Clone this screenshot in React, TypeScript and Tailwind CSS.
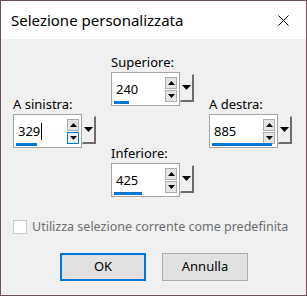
import React from "react";

const font = { fontFamily: '"Noto Sans", "Open Sans", sans-serif' };

function UpArrow() {
  return (
    <svg width="7" height="4" viewBox="0 0 7 4" className="block">
      <polygon points="0,4 7,4 3.5,0" fill="#000" />
    </svg>
  );
}
function DownArrow({ w = 7, h = 4 }: { w?: number; h?: number }) {
  return (
    <svg width={w} height={h} viewBox={`0 0 ${w} ${h}`} className="block">
      <polygon points={`0,0 ${w},0 ${w / 2},${h}`} fill="#000" />
    </svg>
  );
}

function Spinner({
  label,
  value,
  bar,
  caret,
  hoverDown,
}: {
  label: string;
  value: string;
  bar: number;
  caret?: boolean;
  hoverDown?: boolean;
}) {
  return (
    <div className="flex flex-col">
      <div className="h-[16px] text-[13px] leading-[16px] text-black">{label}</div>
      <div className="mt-[2px] flex items-start">
        <div className="relative w-[69px] h-[34px] border border-[#a5a5a5] bg-white flex items-center">
          <div className="flex-1 flex items-center pl-[4px] text-[13px] leading-[16px] text-black">
            <span>{value}</span>
            {caret && <span className="inline-block w-[1px] h-[17px] bg-black ml-[1px]" />}
          </div>
          <div className="flex flex-col gap-[1px] mr-[2px]">
            <div className="w-[12px] h-[12px] border border-[#adadad] bg-[#e5e5e5] flex items-center justify-center">
              <UpArrow />
            </div>
            <div
              className={
                hoverDown
                  ? "w-[12px] h-[12px] border border-[#0078d7] bg-[#e5f1fb] flex items-center justify-center"
                  : "w-[12px] h-[12px] border border-[#adadad] bg-[#e5e5e5] flex items-center justify-center"
              }
            >
              <DownArrow />
            </div>
          </div>
          <div
            className="absolute left-[2px] bottom-[1px] h-[3px] bg-[#0078d7]"
            style={{ width: bar }}
          />
        </div>
        <div className="mt-[2px] w-[14px] h-[28px] bg-[#f0f0f0] border-l border-t border-[#f0f0f0] border-r-2 border-b-2 border-r-[#6d6d6d] border-b-[#6d6d6d] flex items-center justify-center">
          <DownArrow w={9} h={5} />
        </div>
      </div>
    </div>
  );
}

export default function App() {
  return (
    <div
      className="w-[307px] h-[296px] border border-[#6e4f59] bg-[#f0f0f0] flex flex-col"
      style={font}
    >
      <div className="h-[38px] bg-white flex items-center justify-between pl-[10px] pr-[17px]">
        <span className="text-[15px] text-black leading-[20px]">Selezione personalizzata</span>
        <svg width="11" height="11" viewBox="0 0 11 11">
          <path d="M0.5 0.5 L10.5 10.5 M10.5 0.5 L0.5 10.5" stroke="#000" strokeWidth="1" />
        </svg>
      </div>
      <div className="flex pl-[12px] gap-[15px]">
        <div className="mt-[57px]">
          <Spinner label="A sinistra:" value="329" bar={21} caret hoverDown />
        </div>
        <div className="mt-[15px] flex flex-col gap-[39px]">
          <Spinner label="Superiore:" value="240" bar={15} />
          <Spinner label="Inferiore:" value="425" bar={28} />
        </div>
        <div className="mt-[57px]">
          <Spinner label="A destra:" value="885" bar={60} />
        </div>
      </div>
      <div className="mt-[22px] ml-[12px] flex items-center gap-[5px]">
        <div className="w-[14px] h-[14px] border border-[#cccccc] bg-white" />
        <span className="text-[12.5px] leading-[16px] text-[#6d6d6d]">
          Utilizza selezione corrente come predefinita
        </span>
      </div>
      <div className="mt-[18px] flex justify-center gap-[16px] pl-[1px]">
        <button className="w-[86px] h-[28px] border-2 border-[#0078d7] bg-[#e1e1e1] text-[13px] text-black">
          OK
        </button>
        <button className="w-[86px] h-[28px] border border-[#adadad] bg-[#e1e1e1] text-[13px] text-black">
          Annulla
        </button>
      </div>
    </div>
  );
}
